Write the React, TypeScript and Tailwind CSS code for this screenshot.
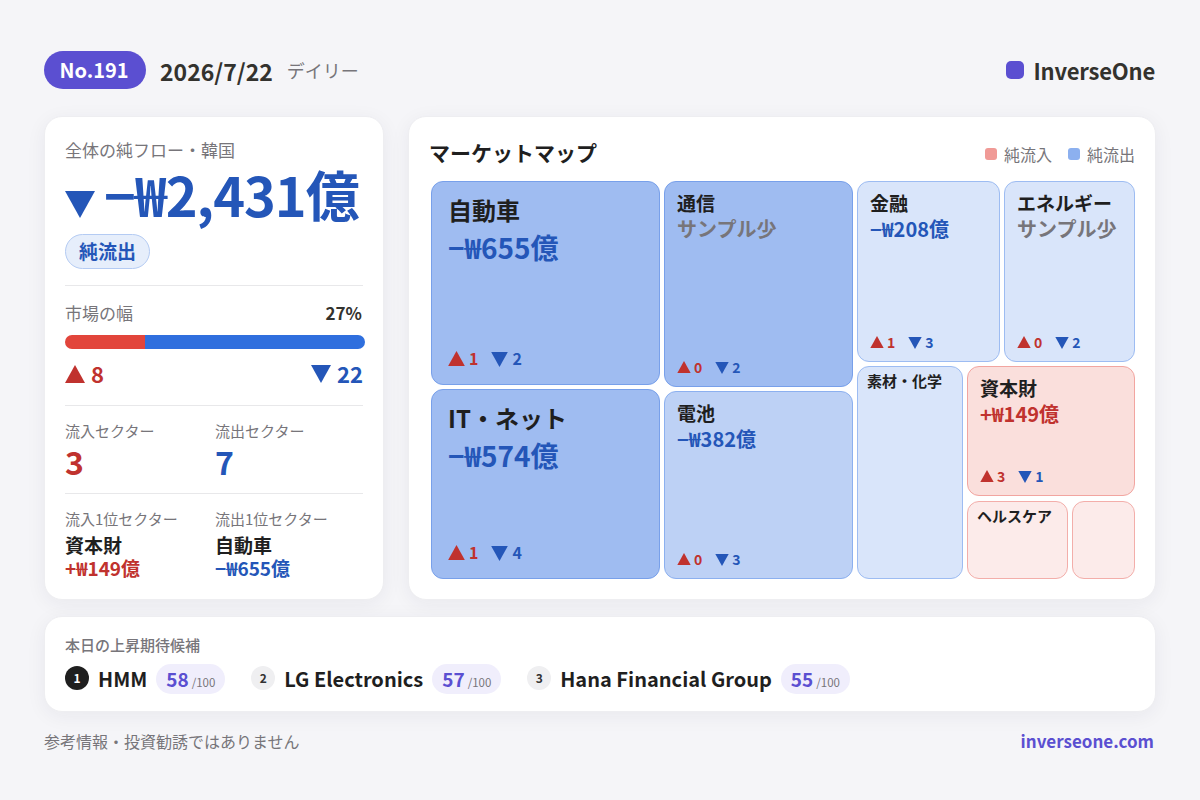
const Up = ({ className = '' }: { className?: string }) => (
  <svg viewBox="0 0 20 18" className={`shrink-0 ${className}`}>
    <path d="M10 0L20 18H0Z" fill="#c0322e" />
  </svg>
)

const Down = ({ className = '' }: { className?: string }) => (
  <svg viewBox="0 0 20 18" className={`shrink-0 ${className}`}>
    <path d="M0 0H20L10 18Z" fill="#2456b8" />
  </svg>
)

type TileProps = {
  className: string
  name: string
  value?: string
  up?: number
  down?: number
  size: 'lg' | 'md' | 'sm' | 'xs'
}

const tones = {
  deep: 'bg-[#9fbcf1] border-[#78a0ea]',
  mid: 'bg-[#bdd1f5] border-[#8cb0ef]',
  pale: 'bg-[#d9e5fa] border-[#9dbcf2]',
  red: 'bg-[#fadfdc] border-[#f2a5a0]',
  redPale: 'bg-[#fcebea] border-[#f3aeaa]',
}

const cardCls = 'bg-white rounded-[18px] border border-[#eeeef1] shadow-[0_4px_20px_rgba(30,30,60,0.06)]'

function Tile({ className, name, value, up, down, size }: TileProps) {
  const pad = size === 'lg' ? 'pt-[11px] pl-4 pb-4' : size === 'md' ? 'pt-[8px] pl-3 pb-[9px]' : 'pt-[4px] pl-[9px]'
  const nameCls = size === 'lg' ? 'text-[24px] leading-[34px]' : size === 'md' ? 'text-[19px] leading-[26px]' : 'text-[15px] leading-[20px]'
  const valCls = size === 'lg' ? 'text-[28px] leading-[38px] mt-[1px]' : 'text-[20px] leading-[25px]'
  const valColor = value === 'サンプル少' ? 'text-[#77757a]' : value?.startsWith('+') ? 'text-[#c0322e]' : 'text-[#2456b8]'
  const tri = size === 'lg' ? 'w-[17px] h-[15px]' : 'w-[14px] h-[12px]'
  const num = size === 'lg' ? 'text-[16px] gap-[13px]' : 'text-[14px] gap-[13px]'
  const inner = size === 'lg' ? 'gap-[4px]' : 'gap-[3px]'
  return (
    <div className={`flex flex-col justify-between border rounded-xl ${pad} ${className}`}>
      <div>
        <div className={`font-bold text-[#1f1f1f] ${nameCls}`}>{name}</div>
        {value && <div className={`font-bold ${valColor} ${valCls}`}>{value}</div>}
      </div>
      {up !== undefined && (
        <div className={`flex items-center font-bold leading-5 ${num}`}>
          <span className={`flex items-center text-[#c0322e] ${inner}`}><Up className={tri} />{up}</span>
          <span className={`flex items-center text-[#2456b8] ${inner}`}><Down className={`mt-[2px] ${tri}`} />{down}</span>
        </div>
      )}
    </div>
  )
}

function Pick({ rank, name, score, dark }: { rank: number; name: string; score: number; dark?: boolean }) {
  return (
    <div className="flex items-center">
      <span className={`w-6 h-6 mb-[3px] rounded-full flex items-center justify-center text-[12px] font-bold ${dark ? 'bg-[#1f1f1f] text-white' : 'bg-[#efeff1] text-[#333]'}`}>{rank}</span>
      <span className="ml-[9px] text-[20px] font-bold text-[#1f1f1f] leading-[30px]">{name}</span>
      <span className="ml-[9px] h-[30px] w-[69px] pl-[10px] rounded-full bg-[#f0eefc] flex items-baseline leading-[30px]">
        <span className="text-[19px] font-bold text-[#5b4fd1]">{score}</span>
        <span className="ml-[3px] text-[11.5px] text-[#77757a]">/100</span>
      </span>
    </div>
  )
}

export default function App() {
  return (
    <div
      className="w-[1200px] h-[800px] bg-[#f5f5f8] px-[44px] pt-[51px] overflow-hidden flex flex-col"
      style={{ fontFamily: '"Noto Sans CJK JP", "Noto Sans", sans-serif' }}
    >
      <header className="flex items-center justify-between h-[38px]">
        <div className="flex items-center">
          <span className="h-[38px] w-[102px] pr-[2px] rounded-full bg-[#5b4fd1] text-white text-[20px] font-bold flex items-center justify-center">No.191</span>
          <span className="ml-[14px] mt-[2px] text-[23px] font-bold text-[#33322e]">2026/7/22</span>
          <span className="ml-[14px] text-[18px] text-[#77757a]">デイリー</span>
        </div>
        <div className="flex items-center mr-[1px]">
          <span className="w-[18px] h-[18px] mb-[1px] rounded-[5px] bg-[#5b4fd1]" />
          <span className="ml-[9px] text-[22px] tracking-[-0.2px] font-bold text-[#33322e]">InverseOne</span>
        </div>
      </header>

      <div className="flex gap-6 mt-[27px] h-[484px]">
        <section className={`w-[340px] px-5 pt-[20px] ${cardCls}`}>
          <div className="text-[17px] leading-[26px] text-[#77757a]">全体の純フロー・韓国</div>
          <div className="flex items-center h-[64px] mt-[-1px] whitespace-nowrap">
            <Down className="w-[30px] h-[27px] mt-[20px]" />
            <span className="ml-[9px] text-[54px] leading-[60px] font-bold text-[#2456b8] tracking-[-1px]">−₩2,431億</span>
          </div>
          <span className="inline-flex mt-[8px] h-[35px] px-[13px] items-center rounded-full bg-[#e6eefb] border border-[#b4cbf3] text-[19px] font-bold text-[#2456b8]">純流出</span>

          <div className="mt-[16px] border-t border-[#e8e8ea] pt-[14px]">
            <div className="flex justify-between items-center mr-[1px] h-[26px]">
              <span className="text-[17px] text-[#77757a]">市場の幅</span>
              <span className="text-[17px] font-bold text-[#33322e]">27%</span>
            </div>
            <div className="flex h-[14px] mt-[9px] mr-[-2px] rounded-full overflow-hidden">
              <div className="w-[80px] bg-[#e2453b]" />
              <div className="flex-1 bg-[#2f6fde]" />
            </div>
            <div className="flex justify-between items-center mt-[11px] h-[26px] text-[22px] font-bold">
              <span className="flex items-center gap-[6px] text-[#c0322e]"><Up className="w-5 h-[18px] mt-[1px]" />8</span>
              <span className="flex items-center gap-[6px] text-[#2456b8]"><Down className="w-5 h-[18px] mt-[2px]" />22</span>
            </div>
          </div>

          <div className="mt-[19px] border-t border-[#e8e8ea] pt-[14px] grid grid-cols-2 gap-x-0 w-[298px]">
            <div>
              <div className="text-[15px] leading-[22px] text-[#77757a]">流入セクター</div>
              <div className="text-[32px] leading-[42px] mt-[-2px] font-bold text-[#c0322e]">3</div>
            </div>
            <div className="ml-[1px]">
              <div className="text-[15px] leading-[22px] text-[#77757a]">流出セクター</div>
              <div className="text-[32px] leading-[42px] mt-[-2px] font-bold text-[#2456b8]">7</div>
            </div>
          </div>

          <div className="mt-[11px] border-t border-[#e8e8ea] pt-[14px] grid grid-cols-2 w-[298px]">
            <div>
              <div className="text-[15px] leading-[22px] text-[#77757a]">流入1位セクター</div>
              <div className="text-[19px] leading-[26px] mt-[2px] font-bold text-[#1f1f1f]">資本財</div>
              <div className="text-[19px] leading-[20px] font-bold text-[#c0322e]">+₩149億</div>
            </div>
            <div className="ml-[1px]">
              <div className="text-[15px] leading-[22px] text-[#77757a]">流出1位セクター</div>
              <div className="text-[19px] leading-[26px] mt-[2px] font-bold text-[#1f1f1f]">自動車</div>
              <div className="text-[19px] leading-[20px] font-bold text-[#2456b8]">−₩655億</div>
            </div>
          </div>
        </section>

        <section className={`flex-1 pl-5 pr-5 pt-[20px] ${cardCls}`}>
          <div className="flex items-center justify-between h-[32px]">
            <h2 className="text-[21px] font-bold text-[#1f1f1f]">マーケットマップ</h2>
            <div className="flex items-center mt-[1px] text-[16px] text-[#77757a]">
              <span className="w-3 h-3 rounded-[3px] bg-[#f09a96]" />
              <span className="ml-[7px]">純流入</span>
              <span className="ml-4 w-3 h-3 rounded-[3px] bg-[#8cb0ef]" />
              <span className="ml-[7px]">純流出</span>
            </div>
          </div>

          <div className="flex gap-1 mt-[12px] ml-[2px] h-[398px]">
            <div className="w-[229px] flex flex-col gap-1">
              <Tile size="lg" className={`h-[204px] ${tones.deep}`} name="自動車" value="−₩655億" up={1} down={2} />
              <Tile size="lg" className={`h-[190px] ${tones.deep}`} name="IT・ネット" value="−₩574億" up={1} down={4} />
            </div>
            <div className="w-[189px] flex flex-col gap-1">
              <Tile size="md" className={`h-[206px] ${tones.deep}`} name="通信" value="サンプル少" up={0} down={2} />
              <Tile size="md" className={`h-[188px] ${tones.mid}`} name="電池" value="−₩382億" up={0} down={3} />
            </div>
            <div className="w-[278px] flex flex-col gap-1">
              <div className="flex gap-1 h-[181px]">
                <Tile size="md" className={`w-[143px] ${tones.pale}`} name="金融" value="−₩208億" up={1} down={3} />
                <Tile size="md" className={`w-[131px] ${tones.pale}`} name="エネルギー" value="サンプル少" up={0} down={2} />
              </div>
              <div className="flex gap-1 h-[213px]">
                <Tile size="sm" className={`w-[106px] ${tones.pale}`} name="素材・化学" />
                <div className="w-[168px] flex flex-col gap-[5px]">
                  <Tile size="md" className={`h-[130px] ${tones.red}`} name="資本財" value="+₩149億" up={3} down={1} />
                  <div className="flex gap-1 h-[78px]">
                    <Tile size="sm" className={`w-[101px] ${tones.redPale}`} name="ヘルスケア" />
                    <div className={`w-[63px] border rounded-xl ${tones.redPale}`} />
                  </div>
                </div>
              </div>
            </div>
          </div>
        </section>
      </div>

      <section className={`mt-4 h-[96px] px-5 pt-[17px] ${cardCls}`}>
        <div className="text-[15px] leading-[22px] font-medium text-[#77757a]">本日の上昇期待候補</div>
        <div className="flex items-center gap-[26px] mt-[8px]">
          <Pick rank={1} name="HMM" score={58} dark />
          <Pick rank={2} name="LG Electronics" score={57} />
          <Pick rank={3} name="Hana Financial Group" score={55} />
        </div>
      </section>

      <footer className="flex items-center justify-between mt-[16px] h-[26px] mr-[2px]">
        <span className="text-[16px] text-[#77757a]">参考情報・投資勧誘ではありません</span>
        <span className="text-[17px] font-bold text-[#5b4fd1]">inverseone.com</span>
      </footer>
    </div>
  )
}
